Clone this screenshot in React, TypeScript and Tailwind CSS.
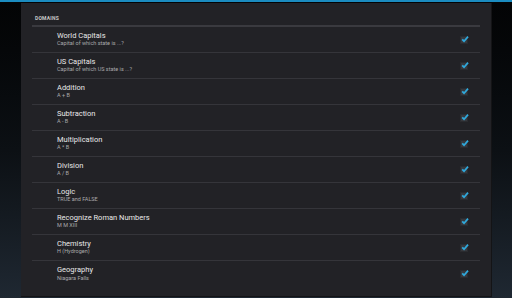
const domains = [
  { title: "World Capitals", sub: "Capital of which state is ...?" },
  { title: "US Capitals", sub: "Capital of which US state is ...?" },
  { title: "Addition", sub: "A + B" },
  { title: "Subtraction", sub: "A - B" },
  { title: "Multiplication", sub: "A * B" },
  { title: "Division", sub: "A / B" },
  { title: "Logic", sub: "TRUE and FALSE" },
  { title: "Recognize Roman Numbers", sub: "M M XIII" },
  { title: "Chemistry", sub: "H (Hydrogen)" },
  { title: "Geography", sub: "Niagara Falls" },
];

function Check() {
  return (
    <div className="w-[8px] h-[8px] bg-[#37383d] border border-[#2a2b2f] relative mt-[1px]">
      <svg viewBox="0 0 10 10" className="absolute -top-[2px] left-[0px] w-[8px] h-[8px]">
        <path d="M1.5 5.5 L3.8 7.8 L8.8 2" fill="none" stroke="#2fa9dc" strokeWidth="2.2" />
      </svg>
    </div>
  );
}

export default function App() {
  return (
    <div
      className="w-[512px] h-[298px] overflow-hidden bg-gradient-to-b from-[#030405] via-[#0c1014] to-[#1f2832] border-t-2 border-[#1b8cc0]"
      style={{ fontFamily: "Roboto, 'Liberation Sans', sans-serif" }}
    >
      <div className="ml-[21px] w-[471px] h-[294px] mt-[1px] bg-[#222226] border-r border-b border-[#141416] px-[11px]">
        {/* Section header */}
        <div className="pt-[12px] pb-[2px] pl-[3px] text-[5px] font-bold tracking-[0.2px] text-[#c8c8c8]">
          DOMAINS
        </div>
        <div className="h-[2px] bg-[#3a3a3f]" />

        {/* Domain list */}
        {domains.map((d, i) => (
          <div
            key={d.title}
            className={
              "h-[26px] flex items-center pl-[25px] pr-[12px] " +
              (i < domains.length - 1 ? "border-b border-[#35353a]" : "")
            }
          >
            <div className="flex-1 leading-none">
              <div className="text-[7.5px] text-[#e8e8e8]">{d.title}</div>
              <div className="text-[5.5px] text-[#a9a9ab] mt-[2px]">{d.sub}</div>
            </div>
            <Check />
          </div>
        ))}
      </div>
    </div>
  );
}
